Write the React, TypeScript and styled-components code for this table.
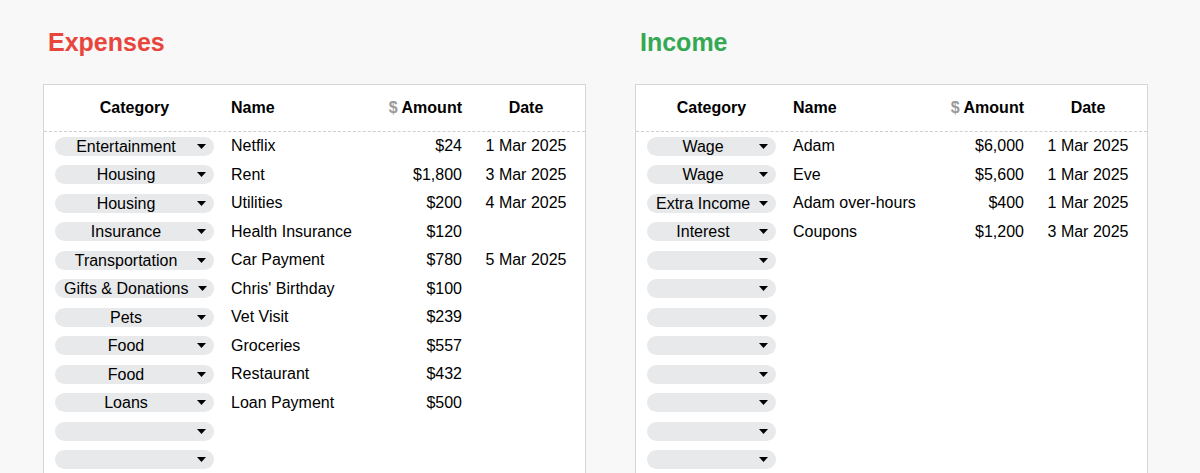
import React from "react";
import styled, { createGlobalStyle } from "styled-components";

const GlobalStyle = createGlobalStyle`
  html, body {
    margin: 0;
    padding: 0;
    height: 100%;
    overflow: hidden;
    background: #f8f8f8;
  }
  body {
    font-family: "Liberation Sans", Arial, sans-serif;
    color: #000;
  }
`;

const Page = styled.div`
  display: grid;
  grid-template-columns: 592px auto;
  align-items: start;
  padding: 27px 0 0 43px;
  height: 100vh;
  box-sizing: border-box;
  overflow: hidden;
`;

const Section = styled.section`
  display: flex;
  flex-direction: column;
  align-items: flex-start;
  gap: 27px;
`;

const Title = styled.h2<{ $color: string }>`
  margin: 0;
  padding-left: 5px;
  font-size: 25px;
  line-height: 30px;
  font-weight: 700;
  color: ${(p) => p.$color};
`;

const Panel = styled.div<{ $cat: number }>`
  background: #fff;
  border: 1px solid #d6d6d6;
  display: grid;
  grid-template-columns: ${(p) => p.$cat}px 167px 81px 122px;
  padding: 0 1px 0 11px;
  font-size: 16px;
`;

const HeadCell = styled.div<{ $align: "left" | "right" | "center"; $pl?: number }>`
  height: 46px;
  display: flex;
  align-items: center;
  justify-content: ${(p) =>
    p.$align === "left" ? "flex-start" : p.$align === "right" ? "flex-end" : "center"};
  padding-left: ${(p) => p.$pl ?? 0}px;
  font-weight: 700;
  line-height: 20px;
  white-space: nowrap;
`;

const Divider = styled.div`
  grid-column: 1 / -1;
  margin: 0 -1px 0 -11px;
  border-top: 1px dashed #cfcfcf;
`;

const Cell = styled.div<{ $align: "left" | "right" | "center"; $pl?: number }>`
  height: 28.5px;
  display: flex;
  align-items: center;
  justify-content: ${(p) =>
    p.$align === "left" ? "flex-start" : p.$align === "right" ? "flex-end" : "center"};
  padding-left: ${(p) => p.$pl ?? 0}px;
  line-height: 20px;
  white-space: nowrap;
`;

const Pill = styled.div`
  width: 100%;
  height: 19px;
  border-radius: 10px;
  background: #e8e9eb;
  display: grid;
  grid-template-columns: 1fr 9px;
  column-gap: 9px;
  align-items: center;
  padding: 0 8px 0 9px;
  box-sizing: border-box;
`;

const PillText = styled.span`
  text-align: center;
  white-space: nowrap;
  line-height: 19px;
`;

const Dollar = styled.span`
  color: #9a9a9a;
  margin-right: 4px;
`;

const Arrow = () => (
  <svg width="9" height="5" viewBox="0 0 9 5" style={{ display: "block" }}>
    <polygon points="0,0 9,0 4.5,5" fill="#000" />
  </svg>
);

type Row = [string, string, string, string];

const empty: Row = ["", "", "", ""];

const expenses: Row[] = [
  ["Entertainment", "Netflix", "$24", "1 Mar 2025"],
  ["Housing", "Rent", "$1,800", "3 Mar 2025"],
  ["Housing", "Utilities", "$200", "4 Mar 2025"],
  ["Insurance", "Health Insurance", "$120", ""],
  ["Transportation", "Car Payment", "$780", "5 Mar 2025"],
  ["Gifts & Donations", "Chris' Birthday", "$100", ""],
  ["Pets", "Vet Visit", "$239", ""],
  ["Food", "Groceries", "$557", ""],
  ["Food", "Restaurant", "$432", ""],
  ["Loans", "Loan Payment", "$500", ""],
  empty,
  empty,
  empty,
];

const income: Row[] = [
  ["Wage", "Adam", "$6,000", "1 Mar 2025"],
  ["Wage", "Eve", "$5,600", "1 Mar 2025"],
  ["Extra Income", "Adam over-hours", "$400", "1 Mar 2025"],
  ["Interest", "Coupons", "$1,200", "3 Mar 2025"],
  empty,
  empty,
  empty,
  empty,
  empty,
  empty,
  empty,
  empty,
  empty,
];

const Table = ({ rows, cat }: { rows: Row[]; cat: number }) => (
  <Panel $cat={cat}>
    <HeadCell $align="center">Category</HeadCell>
    <HeadCell $align="left" $pl={17}>Name</HeadCell>
    <HeadCell $align="right">
      <Dollar>$</Dollar>Amount
    </HeadCell>
    <HeadCell $align="center" $pl={6}>Date</HeadCell>
    <Divider />
    {rows.map((r, i) => (
      <React.Fragment key={i}>
        <Cell $align="center">
          <Pill>
            <PillText>{r[0]}</PillText>
            <Arrow />
          </Pill>
        </Cell>
        <Cell $align="left" $pl={17}>{r[1]}</Cell>
        <Cell $align="right">{r[2]}</Cell>
        <Cell $align="center" $pl={6}>{r[3]}</Cell>
      </React.Fragment>
    ))}
  </Panel>
);

export default function App() {
  return (
    <>
      <GlobalStyle />
      <Page>
        <Section>
          <Title $color="#e8453c">Expenses</Title>
          <Table rows={expenses} cat={159} />
        </Section>
        <Section>
          <Title $color="#34a853">Income</Title>
          <Table rows={income} cat={129} />
        </Section>
      </Page>
    </>
  );
}
